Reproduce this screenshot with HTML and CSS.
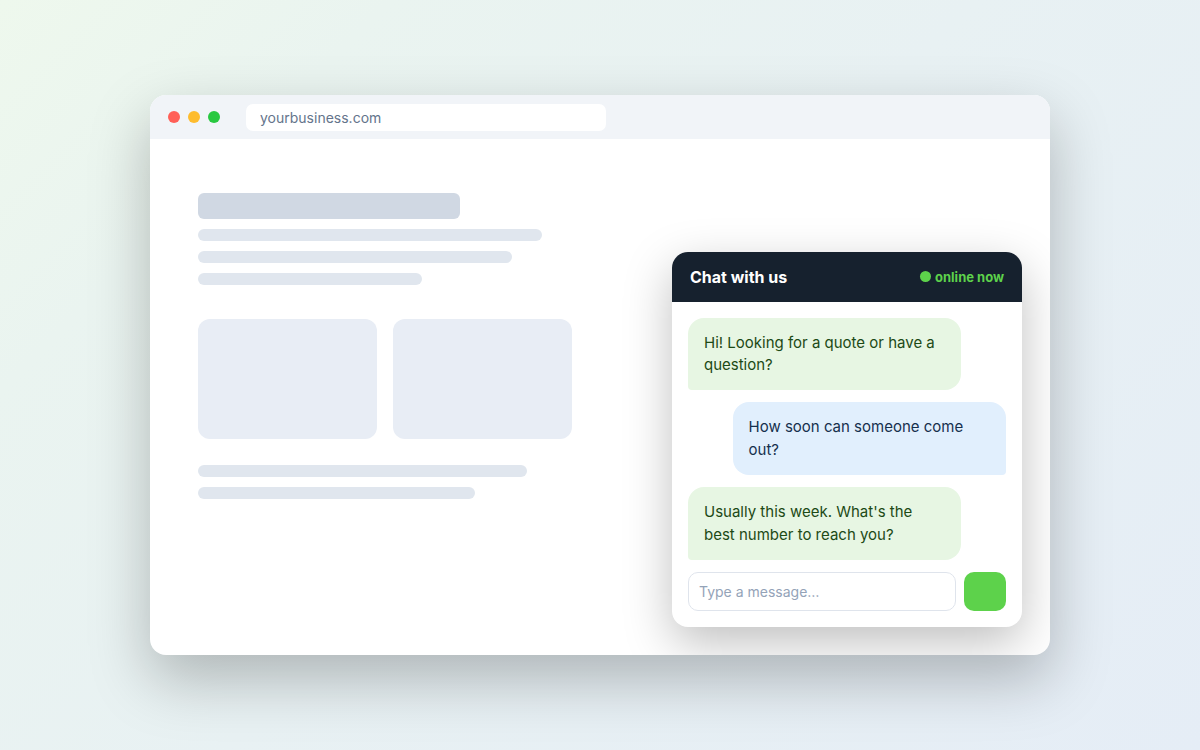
FILE: index.html
```html
<!DOCTYPE html>
<html lang="en">
<head>
<meta charset="utf-8">
<meta name="viewport" content="width=device-width, initial-scale=1">
<title>Website chat widget</title>
<link rel="stylesheet" href="styles.css">
</head>
<body>
<main class="browser">
  <header class="toolbar">
    <div class="lights"><span class="light red"></span><span class="light amber"></span><span class="light green"></span></div>
    <input class="address" type="text" value="yourbusiness.com" aria-label="Address">
  </header>
  <div class="page">
    <div class="content" aria-hidden="true">
      <div class="title"></div>
      <div class="line w92"></div>
      <div class="line w84"></div>
      <div class="line w60"></div>
      <div class="cards"><div class="card"></div><div class="card"></div></div>
      <div class="line w88"></div>
      <div class="line w74"></div>
    </div>
    <section class="chat" aria-label="Chat">
      <header class="chat-header">
        <h1 class="chat-title">Chat with us</h1>
        <span class="status"><span class="dot"></span>online now</span>
      </header>
      <div class="messages">
        <p class="bubble agent">Hi! Looking for a quote or have a question?</p>
        <p class="bubble visitor">How soon can someone come out?</p>
        <p class="bubble agent">Usually this week. What's the best number to reach you?</p>
        <form class="composer">
          <input class="message" type="text" placeholder="Type a message…" aria-label="Message">
          <button class="send" type="button" aria-label="Send"></button>
        </form>
      </div>
    </section>
  </div>
</main>
</body>
</html>
```
FILE: styles.css
```css
* {
  box-sizing: border-box;
}

body {
  margin: 0;
  min-height: 100vh;
  display: flex;
  align-items: center;
  justify-content: center;
  background: linear-gradient(135deg, #eef8ed 0%, #eaf4f0 20%, #e8f1f3 50%, #e5edf6 100%);
  font-family: Inter, "Liberation Sans", sans-serif;
}

.browser {
  width: 75%;
  min-height: 560px;
  display: flex;
  flex-direction: column;
  background: #fff;
  border-radius: 16px;
  overflow: hidden;
  box-shadow: 0 24px 60px rgba(0, 0, 0, 0.25);
}

.toolbar {
  height: 44px;
  padding: 0 18px;
  display: flex;
  align-items: center;
  gap: 26px;
  background: #f1f4f8;
}

.lights {
  display: flex;
  gap: 8px;
}

.light {
  width: 12px;
  height: 12px;
  border-radius: 50%;
}

.red { background: #ff5f57; }
.amber { background: #febc2e; }
.green { background: #28c840; }

.address {
  width: 360px;
  height: 27px;
  padding: 0 14px;
  border: 0;
  border-radius: 7px;
  background: #fff;
  color: #64748b;
  font: 14px Inter, "Liberation Sans", sans-serif;
}

.page {
  flex: 1;
  display: flex;
  justify-content: space-between;
  gap: 48px;
  padding: 54px 28px 28px 48px;
}

.content {
  flex: 0 1 374px;
  display: flex;
  flex-direction: column;
  gap: 10px;
}

.title {
  width: 70%;
  height: 26px;
  border-radius: 6px;
  background: #d0d8e3;
}

.line {
  height: 12px;
  border-radius: 6px;
  background: #e0e6ee;
}

.w92 { width: 92%; }
.w84 { width: 84%; }
.w60 { width: 60%; }
.w88 { width: 88%; }
.w74 { width: 74%; }

.cards {
  display: grid;
  grid-template-columns: 1fr 1fr;
  gap: 16px;
  margin: 24px 0 16px;
}

.card {
  height: 120px;
  border-radius: 12px;
  background: #e8edf5;
}

.chat {
  align-self: flex-end;
  flex: 0 0 350px;
  border-radius: 16px;
  background: #fff;
  overflow: hidden;
  box-shadow: 0 16px 48px rgba(0, 0, 0, 0.25);
}

.chat-header {
  height: 50px;
  padding: 0 18px;
  display: flex;
  align-items: center;
  justify-content: space-between;
  background: #16212e;
}

.chat-title {
  margin: 0;
  color: #fff;
  font-size: 16px;
  font-weight: 700;
}

.status {
  display: flex;
  align-items: center;
  gap: 4px;
  color: #5dd24b;
  font-size: 13px;
  font-weight: 700;
}

.dot {
  width: 11px;
  height: 11px;
  border-radius: 50%;
  background: currentColor;
}

.messages {
  display: flex;
  flex-direction: column;
  gap: 12px;
  padding: 16px;
  font-size: 16px;
  line-height: 140%;
}

.bubble {
  width: 86%;
  margin: 0;
  padding: 14px 16px;
  border-radius: 16px;
  font-size: 15px;
}

.agent {
  background: #e7f6e3;
  color: #1d4a16;
  border-bottom-left-radius: 4px;
}

.visitor {
  align-self: flex-end;
  background: #e1effd;
  color: #16304d;
  border-bottom-right-radius: 4px;
}

.composer {
  display: flex;
  gap: 8px;
}

.message {
  flex: 1;
  min-width: 0;
  height: 39px;
  padding: 0 10px;
  border: 1px solid #dfe4ec;
  border-radius: 10px;
  background: #fff;
  font: 14px Inter, "Liberation Sans", sans-serif;
}

.message::placeholder {
  color: #94a3b8;
}

.send {
  width: 42px;
  padding: 0;
  border: 0;
  border-radius: 10px;
  background: #5dd24b;
}
```
